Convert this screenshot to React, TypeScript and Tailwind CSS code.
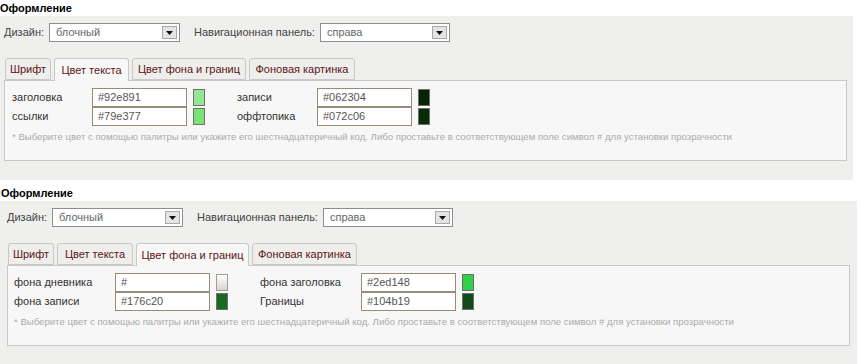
import type { ReactNode } from "react";

type ColorRow = { label: string; value: string; swatch: string };

type SectionProps = {
  titleClass: string;
  panelClass: string;
  boxClass: string;
  labelCol: string;
  tabs: { label: string; w: string }[];
  active: number;
  left: ColorRow[];
  right: ColorRow[];
};

const TABS_A = [
  { label: "Шрифт", w: "w-[46px]" },
  { label: "Цвет текста", w: "w-[75px]" },
  { label: "Цвет фона и границ", w: "w-[114px]" },
  { label: "Фоновая картинка", w: "w-[106px]" },
];

const TABS_B = [
  { label: "Шрифт", w: "w-[46px]" },
  { label: "Цвет текста", w: "w-[76px]" },
  { label: "Цвет фона и границ", w: "w-[113px]" },
  { label: "Фоновая картинка", w: "w-[105px]" },
];

function Select({ value, className }: { value: string; className: string }) {
  return (
    <div
      className={`flex h-[19px] items-center border border-[#8e8e8e] bg-white pl-[6px] pr-[2px] text-[#666] ${className}`}
    >
      <span className="flex-1 leading-none">{value}</span>
      <span className="flex h-[13px] w-[15px] items-center justify-center border border-[#a8a8a8] bg-[#e4e4e4]">
        <svg width="7" height="4" viewBox="0 0 7 4">
          <path d="M0 0h7L3.5 4z" fill="#111" />
        </svg>
      </span>
    </div>
  );
}

function Swatch({ color }: { color: string }) {
  const transparent = color === "";
  return (
    <span
      className={`ml-[6px] block h-[17px] w-[12px] border ${
        transparent
          ? "border-[#a09c98] bg-gradient-to-b from-white to-[#d8d4d0]"
          : "border-[#6f6f6f]"
      }`}
      style={transparent ? undefined : { backgroundColor: color }}
    />
  );
}

function ColorColumn({ rows, labelCol }: { rows: ColorRow[]; labelCol: string }) {
  return (
    <div className="flex flex-col">
      {rows.map((r) => (
        <div key={r.label} className="flex h-[19px] items-center">
          <span className={`${labelCol} text-[#333]`}>{r.label}</span>
          <span className="flex h-[19px] w-[95px] items-center border border-[#978b7c] bg-white pl-[5px] text-[#555]">
            {r.value}
          </span>
          <Swatch color={r.swatch} />
        </div>
      ))}
    </div>
  );
}

function Section(p: SectionProps): ReactNode {
  return (
    <div>
      <div className={`font-bold text-[11px] leading-[16px] text-black ${p.titleClass}`}>
        Оформление
      </div>
      <div className={`bg-[#efefed] pt-[7px] ${p.panelClass}`}>
        <div className="flex items-center">
          <span className="mr-[5px] text-[#444]">Дизайн:</span>
          <Select value="блочный" className="w-[131px]" />
          <span className="ml-[14px] mr-[5px] text-[#444]">Навигационная панель:</span>
          <Select value="справа" className="w-[130px]" />
        </div>
        <div className="mt-[16px] flex items-end gap-[3px] pl-[1px]">
          {p.tabs.map((t, i) => (
            <div
              key={t.label}
              className={`${t.w} flex h-[22px] items-center justify-center whitespace-nowrap rounded-t-[3px] border border-[#c8c8c8] text-[#5c1414] ${
                i === p.active
                  ? "relative z-10 h-[23px] -mb-px border-b-0 bg-[#f7f7f7]"
                  : "bg-[#eeeeec]"
              }`}
            >
              {t.label}
            </div>
          ))}
        </div>
        <div className={`border border-[#c8c8c8] bg-[#f7f7f7] pt-[7px] ${p.boxClass}`}>
          <div className="flex gap-[32px]">
            <ColorColumn rows={p.left} labelCol={p.labelCol} />
            <ColorColumn rows={p.right} labelCol={p.labelCol} />
          </div>
          <p className="mt-[4px] text-[9.6px] leading-[14px] text-[#ababab]">
            * Выберите цвет с помощью палитры или укажите его шестнадцатеричный код. Либо
            проставьте в соответствующем поле символ # для установки прозрачности
          </p>
        </div>
      </div>
    </div>
  );
}

export default function App() {
  return (
    <div className="h-[364px] w-[860px] overflow-hidden bg-white font-['Liberation_Sans',Arial,sans-serif] text-[11px]">
      <Section
        titleClass="h-[16px]"
        panelClass="h-[164px] w-[853px] pl-[4px]"
        boxClass="h-[81px] w-[843px] pl-[7px]"
        labelCol="w-[80px]"
        tabs={TABS_A}
        active={1}
        left={[
          { label: "заголовка", value: "#92e891", swatch: "#92e891" },
          { label: "ссылки", value: "#79e377", swatch: "#79e377" },
        ]}
        right={[
          { label: "записи", value: "#062304", swatch: "#062304" },
          { label: "оффтопика", value: "#072c06", swatch: "#072c06" },
        ]}
      />
      <Section
        titleClass="h-[21px] pt-[5px] pl-[1px]"
        panelClass="h-[163px] w-[857px] pl-[7px]"
        boxClass="h-[81px] w-[843px] pl-[6px]"
        labelCol="w-[101px]"
        tabs={TABS_B}
        active={2}
        left={[
          { label: "фона дневника", value: "#", swatch: "" },
          { label: "фона записи", value: "#176c20", swatch: "#176c20" },
        ]}
        right={[
          { label: "фона заголовка", value: "#2ed148", swatch: "#2ed148" },
          { label: "Границы", value: "#104b19", swatch: "#104b19" },
        ]}
      />
    </div>
  );
}
